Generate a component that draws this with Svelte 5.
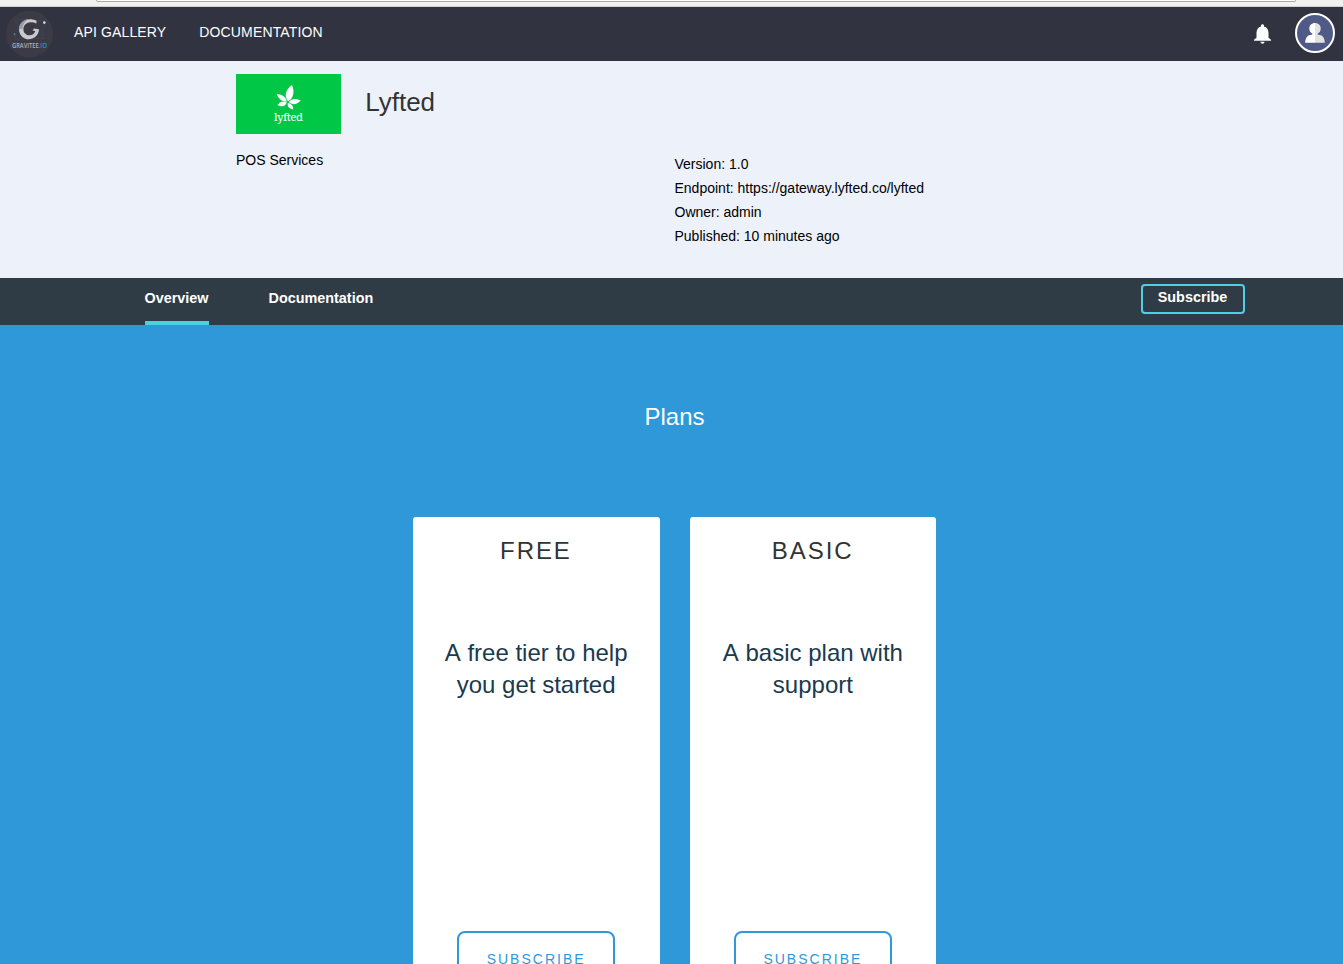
<script>
  const details = [
    'Version: 1.0',
    'Endpoint: https://gateway.lyfted.co/lyfted',
    'Owner: admin',
    'Published: 10 minutes ago'
  ];
  const plans = [
    { name: 'FREE', description: 'A free tier to help you get started' },
    { name: 'BASIC', description: 'A basic plan with support' }
  ];
</script>

<div class="page">
  <div class="chrome"><div class="address"></div></div>

  <header>
    <svg class="brand" width="48" height="48" viewBox="0 0 48 48">
      <circle cx="24.5" cy="24" r="23.5" fill="#3b3a45" />
      <path d="M10 10.5C18 8 23 12 34 10.5C42 10 42 13 38 18C35 23 39 27 39 28.5C30 30 22 25 13 29C8 30 10 23 14 19C17 16 11 13 10 10.5Z" fill="none" stroke="#2c5065" stroke-width=".7" />
      <path d="M31.5 10.8C27 8.6 21 8.7 17.5 12C13.3 15.8 13 22.2 16.6 26.2C20.2 30.1 26.5 30.3 30.4 26.8C32.6 24.8 33.9 22.2 34 19.2L29 18.6L27.6 20.4L30.3 20.9C29.6 23.5 27.3 25.3 24.5 25.3C21 25.3 18.4 22.7 18.4 19.2C18.4 15.7 20.8 13 24.2 12.5C26.8 12.1 29.3 12.5 31.3 13.8Z" fill="#cacacc" />
      <path d="M14 19C14.3 13.5 18.3 9.6 23.8 9.1C20.2 11.1 17.8 14.5 17.3 19Z" fill="#9d9da1" />
      <circle cx="39.3" cy="12.6" r="1.3" fill="#d8dbe0" />
      <circle cx="9.5" cy="24" r=".8" fill="#87949e" />
      <text x="7" y="38.2" textLength="26.7" lengthAdjust="spacingAndGlyphs" fill="#b4b4ba">GRAVITEE</text>
      <text x="33.7" y="38.2" textLength="8.3" lengthAdjust="spacingAndGlyphs" fill="#2a94cc">.IO</text>
    </svg>
    <nav><span>API GALLERY</span><span>DOCUMENTATION</span></nav>
    <svg class="bell" width="24" height="24" viewBox="0 0 24 24" fill="#fff">
      <path d="M12 22c1.1 0 2-.9 2-2h-4c0 1.1.89 2 2 2zm6-6v-5c0-3.07-1.64-5.64-4.5-6.32V4c0-.83-.67-1.5-1.5-1.5s-1.5.67-1.5 1.5v.68C7.63 5.36 6 7.92 6 11v5l-2.5 2v1h17v-1l-2.5-2z" transform="translate(.5 -.2)" />
    </svg>
    <svg class="avatar" width="40" height="40" viewBox="0 0 40 40">
      <circle cx="20" cy="20" r="19" fill="#505a86" stroke="#fff" stroke-width="2" />
      <path d="M20 10C16.7 10 14.3 12.3 14.3 15.4C14.3 18 15.5 19.7 17.3 20.5V21.4C14.8 21.9 12.5 22.3 11.6 24.2C10.6 26.3 10.2 27.6 10.2 29.8H20Z" fill="#fff" />
      <path d="M20 10C23.3 10 25.7 12.3 25.7 15.4C25.7 18 24.5 19.7 22.7 20.5V21.4C25.2 21.9 27.5 22.3 28.4 24.2C29.4 26.3 29.8 27.6 29.8 29.8H20Z" fill="#e2e2e2" />
    </svg>
  </header>

  <section class="info">
    <div class="title">
      <svg width="105" height="60" viewBox="0 0 105 60">
        <rect width="105" height="60" fill="#00c846" />
        <g fill="#fff">
          <path d="M52 27.3C47.3 21.5 50.5 14.5 56 11C58.8 17 57.7 24.5 52 27.3Z" />
          <path d="M50.7 27.7C45.5 27.7 42.3 24.5 40.6 19.8C46.7 20.7 50.3 23.2 50.7 27.7Z" />
          <path d="M52.8 28C56 24.1 60 24.3 64.8 26.5C60.5 30.9 56.3 31.2 52.8 28Z" />
          <path d="M50.7 28.3C49.7 32.3 46 33.3 41.6 31C43.8 27.7 47.2 26.8 50.7 28.3Z" />
          <path d="M51.8 29.1C55.7 29.9 57.4 32 57.1 35.4C53.2 34.7 51.1 32.8 51.8 29.1Z" />
        </g>
        <text x="38" y="47" textLength="29" fill="#fff">lyfted</text>
      </svg>
      <h1>Lyfted</h1>
    </div>
    <div class="facts">
      <p>POS Services</p>
      <ul>
        {#each details as detail}<li>{detail}</li>{/each}
      </ul>
    </div>
  </section>

  <div class="tabs">
    <span class="tab active">Overview</span>
    <span class="tab">Documentation</span>
    <button>Subscribe</button>
  </div>

  <main>
    <h2>Plans</h2>
    <div class="plans">
      {#each plans as plan}
        <article>
          <h3>{plan.name}</h3>
          <p>{plan.description}</p>
          <button>SUBSCRIBE</button>
        </article>
      {/each}
    </div>
  </main>
</div>

<style>
  :global(body) { margin: 0; overflow: hidden; }
  .page {
    height: 964px;
    overflow: hidden;
    display: flex;
    flex-direction: column;
    font-family: "Liberation Sans", Arial, sans-serif;
    font-size: 14px;
    color: #000;
  }
  .page * { box-sizing: border-box; }
  h1, h2, h3, p, ul { margin: 0; padding: 0; font-weight: 400; }
  .chrome {
    flex: none;
    height: 7px;
    background: #f2f1f0;
    border-bottom: 1px solid #ccd0d0;
    padding: 0 47px 0 96px;
  }
  .address {
    height: 2px;
    border: 1px solid #aaa9a6;
    border-top: 0;
    border-radius: 0 0 3px 3px;
    background: #fff;
  }
  header {
    flex: none;
    height: 54px;
    background: #323341;
    display: flex;
    align-items: center;
    padding: 0 8px 0 5px;
  }
  .brand text { font-family: "Open Sans", sans-serif; font-size: 6.3px; font-weight: 600; }
  nav {
    display: flex;
    gap: 33px;
    margin: -5px 0 0 21px;
    flex: 1;
    color: #fff;
    letter-spacing: .14px;
  }
  .bell { margin-right: 21px; }
  .avatar { margin-top: -2px; }
  .info {
    flex: none;
    height: 217px;
    background: #edf2fa;
    padding: 13px 0 0 236px;
  }
  .title { display: flex; height: 60px; }
  .title text { font-family: "Noto Serif", "DejaVu Serif", serif; font-size: 11.5px; }
  h1 { margin-left: 24.2px; font-size: 26px; line-height: 56px; color: #333; }
  .facts { display: grid; grid-template-columns: 438.5px 1fr; margin-top: 18px; }
  .facts p { line-height: 16px; }
  ul { list-style: none; line-height: 24px; }
  .tabs {
    flex: none;
    height: 47px;
    background: #303c45;
    display: flex;
    padding: 0 98px 0 144.5px;
    color: #fff;
    font-weight: 700;
    font-size: 14.4px;
  }
  .tab { height: 47px; line-height: 40px; margin-right: 60px; }
  .active { border-bottom: 4px solid #4dd0e6; }
  .tabs button {
    margin: 6px 0 0 auto;
    width: 104px;
    height: 30px;
    padding: 0 1px 4px 0;
    border: 2px solid #4dd0e6;
    border-radius: 4px;
    background: none;
    color: #fff;
    font: inherit;
  }
  main { flex: 1; background: #2f98d9; overflow: hidden; }
  h2 {
    margin: 77px 0 85px;
    padding-left: 6px;
    text-align: center;
    color: #fff;
    font-size: 24px;
    line-height: 30px;
  }
  .plans { display: flex; justify-content: center; gap: 30px; padding-left: 6px; }
  article {
    width: 246.75px;
    height: 520px;
    flex: none;
    display: flex;
    flex-direction: column;
    align-items: center;
    background: #fff;
    border-radius: 3px;
    text-align: center;
  }
  h3 { margin-top: 19px; font-size: 24px; line-height: 30px; letter-spacing: 1.92px; color: #333; padding-right: .4px; }
  article p {
    width: 190px;
    height: 277px;
    margin-top: 71px;
    color: #1b3a4e;
    font-size: 24px;
    font-kerning: none;
    line-height: 32px;
  }
  article button {
    margin-top: 17px;
    width: 158px;
    height: 56px;
    flex: none;
    border: 2px solid #2f98d9;
    border-radius: 8px;
    background: #fff;
    color: #2f98d9;
    font: 14px "Liberation Sans", Arial, sans-serif;
    letter-spacing: 2px;
  }
</style>
